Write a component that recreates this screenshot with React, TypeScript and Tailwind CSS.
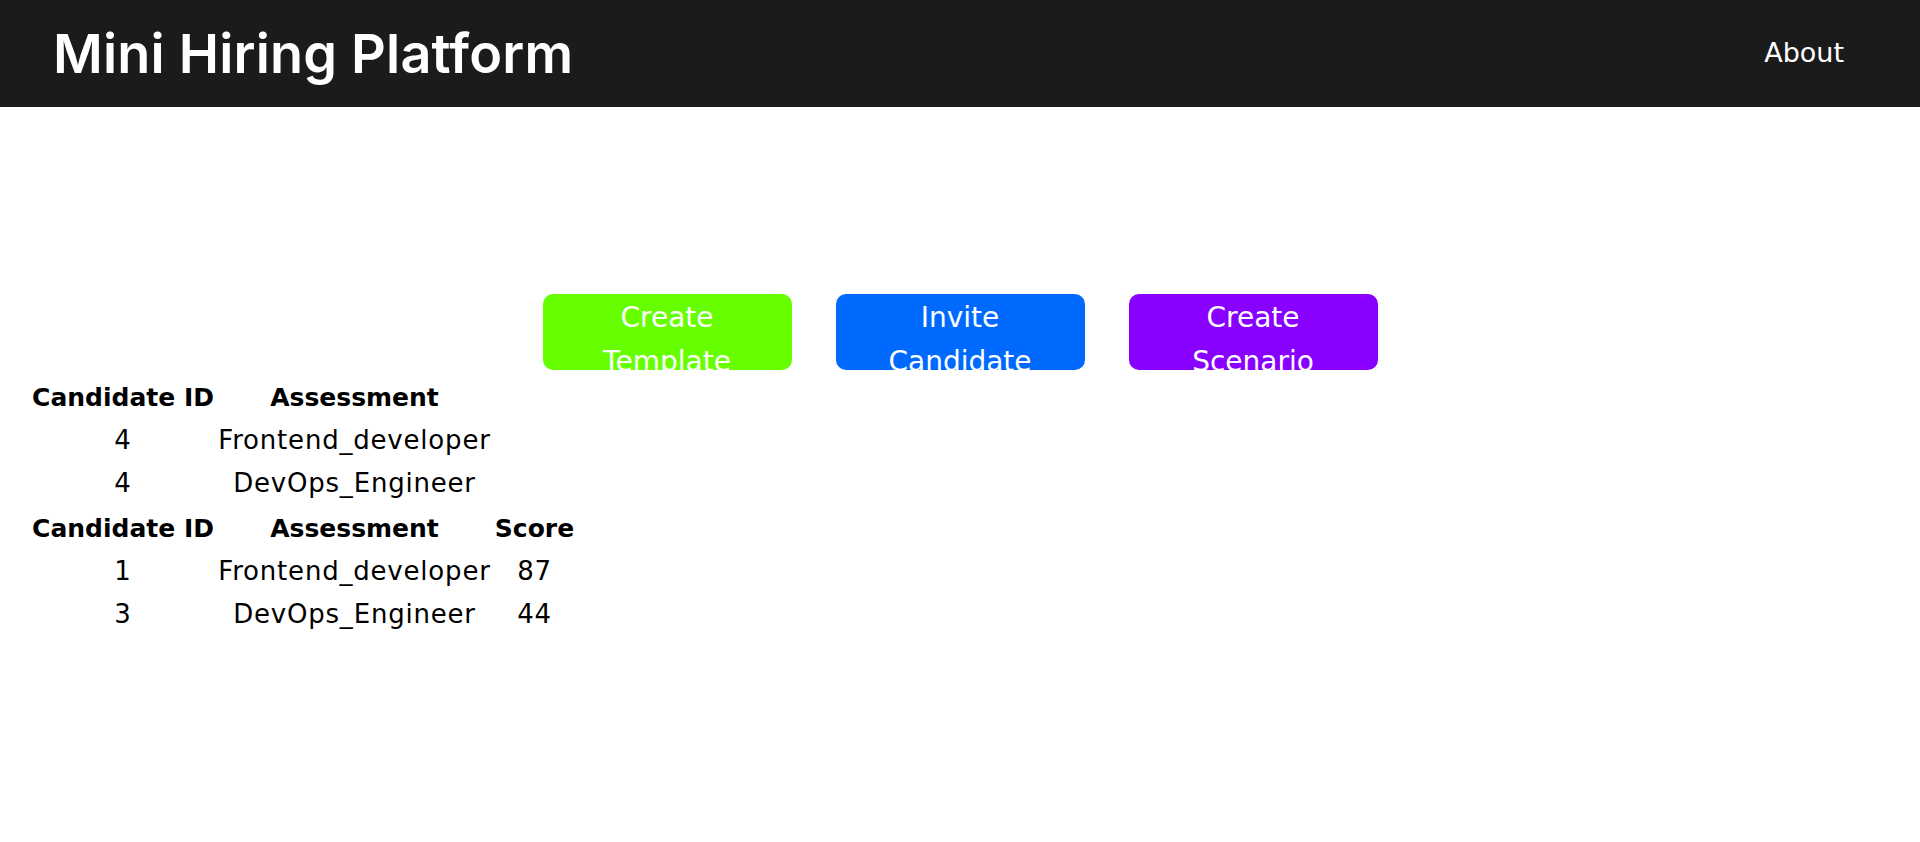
import React from "react"

const bodyFont = { fontFamily: "'DejaVu Sans', 'Noto Sans', sans-serif" }
const titleFont = { fontFamily: "Inter, 'Noto Sans', sans-serif" }

const pending = [
  { id: "4", assessment: "Frontend_developer" },
  { id: "4", assessment: "DevOps_Engineer" },
]

const scored = [
  { id: "1", assessment: "Frontend_developer", score: "87" },
  { id: "3", assessment: "DevOps_Engineer", score: "44" },
]

function Header() {
  return (
    <header className="flex h-[107px] items-center justify-between bg-[#1b1b1b] pl-[53px] pr-[76px] text-white">
      <h1 className="text-[54px] font-semibold leading-none tracking-[0.2px]" style={titleFont}>
        Mini Hiring Platform
      </h1>
      <nav>
        <a href="#" className="text-[27px]">
          About
        </a>
      </nav>
    </header>
  )
}

function ActionButton({ label, color }: { label: string; color: string }) {
  return (
    <button
      className={`h-[76px] w-[249px] overflow-hidden rounded-[10px] px-8 pt-[2px] text-[28px] leading-[44px] text-white ${color}`}
    >
      <span className="block">{label}</span>
    </button>
  )
}

const cell = "flex h-[43px] items-center justify-center whitespace-nowrap"
const head = `${cell} text-[25px] font-bold tracking-normal`

export default function App() {
  return (
    <div className="min-h-screen bg-white text-black" style={bodyFont}>
      <Header />

      <main>
        <div className="flex justify-center gap-[44px] pt-[187px]">
          <ActionButton label="Create Template" color="bg-[#66ff00]" />
          <ActionButton label="Invite Candidate" color="bg-[#006aff]" />
          <ActionButton label="Create Scenario" color="bg-[#8800ff]" />
        </div>

        <div className="pl-[33px] pt-[6px]">
          <div className="grid grid-cols-[180px_275px] gap-x-[4px] text-center text-[26px] tracking-[0.8px]">
            <div className={head}>Candidate ID</div>
            <div className={head}>Assessment</div>
            {pending.map((row, i) => (
              <React.Fragment key={i}>
                <div className={cell}>{row.id}</div>
                <div className={cell}>{row.assessment}</div>
              </React.Fragment>
            ))}
          </div>

          <div className="mt-[2px] grid grid-cols-[180px_275px_77px] gap-x-[4px] text-center text-[26px] tracking-[0.8px]">
            <div className={head}>Candidate ID</div>
            <div className={head}>Assessment</div>
            <div className={head}>Score</div>
            {scored.map((row, i) => (
              <React.Fragment key={i}>
                <div className={cell}>{row.id}</div>
                <div className={cell}>{row.assessment}</div>
                <div className={cell}>{row.score}</div>
              </React.Fragment>
            ))}
          </div>
        </div>
      </main>
    </div>
  )
}
